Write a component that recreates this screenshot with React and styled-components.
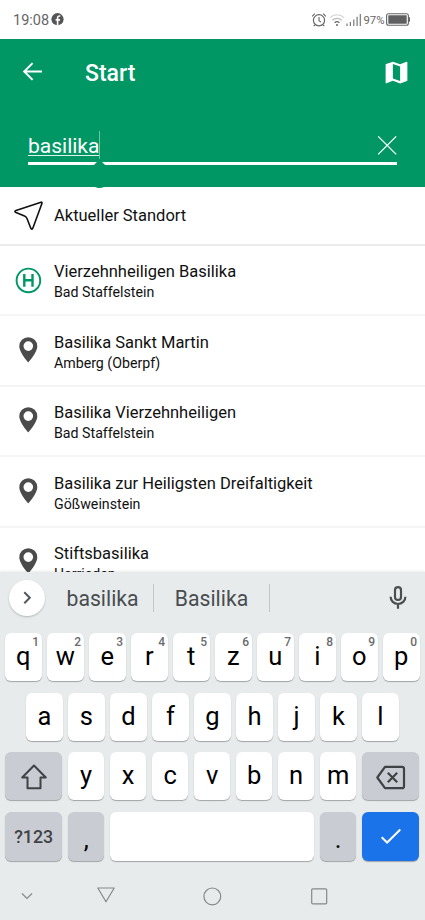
import React from "react";
import styled, { createGlobalStyle } from "styled-components";

const colors = {
  green: "#009765",
  keyboard: "#e7ebec",
  modifier: "#c9ccd3",
  enter: "#1a73e8",
  dark: "#3f4346"
};

const GlobalStyle = createGlobalStyle`
  * {
    box-sizing: border-box;
  }
  body {
    margin: 0;
    background: #fff;
    font-family: Roboto, "Liberation Sans", sans-serif;
  }
  svg {
    display: block;
    flex: none;
  }
`;

const Screen = styled.div`
  width: 425px;
  height: 920px;
  display: flex;
  flex-direction: column;
  overflow: hidden;
  background: #fff;
`;

const StatusBar = styled.div`
  height: 39px;
  flex: none;
  display: flex;
  align-items: center;
  padding: 0 14px 0 13px;
  color: #666;
`;

const Clock = styled.span`
  font-size: 14.5px;
  line-height: 20px;
  margin-right: 2px;
  padding-top: 2px;
`;

const StatusIcons = styled.div`
  display: flex;
  align-items: center;
  gap: 1.5px;
  margin-left: auto;
`;

const Percent = styled.span`
  font-size: 11.3px;
  width: 21px;
  padding-top: 1px;
`;

const Header = styled.header`
  position: relative;
  height: 148px;
  flex: none;
  background: ${colors.green};
  color: #fff;
`;

const TitleBar = styled.div`
  display: flex;
  align-items: center;
  height: 66px;
  padding: 0 14px 0 20px;
`;

const Title = styled.h1`
  flex: 1;
  margin: 4px 0 0 41px;
  font-size: 23px;
  line-height: 28px;
  font-weight: 500;
`;

const SearchField = styled.div`
  display: flex;
  justify-content: space-between;
  height: 34px;
  margin: 26px 28px 0;
  border-bottom: 3px solid #fff;
`;

const Query = styled.span`
  height: 25px;
  font-size: 21px;
  line-height: 31px;
  border-bottom: 1px solid #e2f3ed;
`;

const Cursor = styled.span`
  width: 1px;
  height: 28px;
  margin-right: auto;
  background: #6cc3a6;
`;

const CursorHandle = styled.svg`
  position: absolute;
  left: 87px;
  top: 120px;
  z-index: 1;
`;

const Results = styled.div`
  flex: none;
  height: 385px;
  overflow: hidden;
`;

const CurrentLocation = styled.div`
  display: flex;
  align-items: center;
  height: 59px;
  border-bottom: 2px solid #ebebeb;
`;

const Result = styled.div`
  display: flex;
  align-items: center;
  height: 70.4px;
  border-bottom: 2px solid #f5f5f5;
`;

const IconSlot = styled.div`
  width: 54px;
  padding: 1px 0 0 13px;
`;

const ResultText = styled.div`
  padding-top: 3.6px;
`;

const Name = styled.div`
  font-size: 16.5px;
  line-height: 22px;
  color: #111;
`;

const Place = styled.div`
  font-size: 14.2px;
  line-height: 19.2px;
  color: #111;
`;

const Keyboard = styled.div`
  flex: 1;
  background: ${colors.keyboard};
  box-shadow: 0 -1px 2px rgba(0, 0, 0, 0.08);
  position: relative;
`;

const Suggestions = styled.div`
  display: flex;
  align-items: center;
  height: 52px;
  padding: 0 14px 0 9px;
`;

const Expand = styled.div`
  display: flex;
  align-items: center;
  justify-content: center;
  width: 36px;
  height: 36px;
  border-radius: 50%;
  background: #fff;
  box-shadow: 0 1px 2px rgba(0, 0, 0, 0.22);
`;

const Suggestion = styled.div`
  width: ${props => props.$width}px;
  height: 28px;
  padding-left: ${props => props.$indent}px;
  line-height: 30px;
  font-size: 21.2px;
  color: #494d50;
  border-right: 1px solid #c3c7c9;
`;

const Keys = styled.div`
  display: flex;
  flex-direction: column;
  gap: 11.6px;
  padding: 9px 5px 0;
`;

const KeyRow = styled.div`
  display: flex;
  gap: 5.5px;
  padding-left: ${props => props.$indent || 0}px;
`;

const Key = styled.div`
  position: relative;
  display: flex;
  align-items: center;
  justify-content: center;
  width: ${props => props.$width || 36.5}px;
  height: ${props => (props.$tall ? 49 : 48)}px;
  padding-top: ${props => props.$drop || 0}px;
  padding-bottom: ${props => (props.$drop === undefined ? 2 : 0)}px;
  border-radius: 6px;
  background: ${props => props.$background || "#fff"};
  box-shadow: 0 1px 1px rgba(0, 0, 0, 0.3);
  font-size: 25.5px;
  line-height: 30px;
  color: #000;
`;

const Hint = styled.span`
  position: absolute;
  top: 2px;
  right: 2.5px;
  font-size: 12px;
  line-height: 14px;
  font-weight: 500;
  color: #686b6e;
`;

const SymbolsLabel = styled.span`
  font-size: 17.8px;
  font-weight: 500;
  color: ${colors.dark};
`;

const NavBar = styled.div`
  display: grid;
  grid-template-columns: 53px 106px 106px 107px;
  align-items: center;
  justify-items: center;
  height: 24px;
  margin-top: 23px;
`;

const FacebookIcon = () => (
  <svg width="13" height="13" viewBox="0 0 13 13">
    <circle cx="6.5" cy="6.2" r="6.1" fill="#555" />
    <path
      d="M9.3 3H8.2C7 3 6.6 3.7 6.6 4.7V12.400M4.600 6.900H9"
      fill="none"
      stroke="#fff"
      strokeWidth="1.6"
    />
  </svg>
);

const AlarmIcon = () => (
  <svg width="16" height="16" viewBox="0 0 16 16" fill="none" stroke="#666">
    <circle cx="8" cy="8.3" r="5.6" strokeWidth="1.2" />
    <path
      d="M8 5v3.6l2 1.5M1.2 4.3l2.6-2.6M14.8 4.3l-2.6-2.6M4 12.8l-1.3 1.4M12 12.8l1.3 1.4"
      strokeWidth="1.1"
    />
  </svg>
);

const WifiIcon = () => (
  <svg width="16" height="14" viewBox="0 0 16 14" fill="none" strokeWidth="1.2">
    <path d="M1 4.6a10 10 0 0 1 14 0" stroke="#d2d2d2" />
    <path d="M3.4 7.3a6.6 6.6 0 0 1 9.2 0" stroke="#bbb" />
    <path d="M5.6 9.8a3.6 3.6 0 0 1 4.8 0" stroke="#666" />
    <circle cx="8" cy="12" r="1" fill="#666" />
  </svg>
);

const SignalIcon = () => (
  <svg width="16" height="14" viewBox="0 0 16 14" stroke="#777" strokeWidth="1.2">
    <path d="M1 13v-2.5M4.4 13V9M7.8 13V6.5M11.1 13V3.7M14.3 13V1" />
  </svg>
);

const BatteryIcon = () => (
  <svg width="25" height="13" viewBox="0 0 25 13">
    <rect x="0.6" y="0.7" width="21.8" height="11.6" rx="2" fill="none" stroke="#666" strokeWidth="1.1" />
    <rect x="2.3" y="2.2" width="18.4" height="8.6" rx="0.5" fill="#606060" />
    <path d="M23.3 4.2v4.6" stroke="#666" strokeWidth="1.4" />
  </svg>
);

const BackIcon = () => (
  <svg width="24" height="24" viewBox="0 0 24 24" fill="none" stroke="#fff" strokeWidth="2">
    <path d="M22 11.5H4.4M12.6 3.1l-8.4 8.4 8.4 8.4" />
  </svg>
);

const MapIcon = () => (
  <svg width="29" height="29" viewBox="0 0 24 24" fill="#fff">
    <path d="M20.5 3l-.16.03L15 5.1 9 3 3.36 4.9c-.21.07-.36.25-.36.48V20.5c0 .28.22.5.5.5l.16-.03L9 18.9l6 2.1 5.64-1.9c.21-.07.36-.25.36-.48V3.5c0-.28-.22-.5-.5-.5zM15 19l-6-2.11V5l6 2.11V19z" />
  </svg>
);

const ClearIcon = () => (
  <svg width="20" height="28" viewBox="0 0 20 28" stroke="#fff" strokeWidth="1.3">
    <path d="M1.2 5.4l18 18M19.2 5.4l-18 18" />
  </svg>
);

const LocationArrow = () => (
  <svg width="31" height="30" viewBox="0 0 31 30" fill="none" stroke="#111" strokeWidth="1.6" strokeLinejoin="round">
    <path d="M28 1.2L3 9.6Q0.8 10.5 3 11.5L11.5 15Q13.3 15.700 14 17.500L17.800 27.200Q19.200 29.200 20 26.800L29 2.200Q29.200 1 28 1.200Z" />
  </svg>
);

const StopIcon = () => (
  <svg width="30" height="30" viewBox="0 0 30 30" fill="none" stroke={colors.green}>
    <circle cx="15.4" cy="14.4" r="11.8" strokeWidth="1.9" />
    <path d="M11.3 8v12.8M19.5 8v12.800M11.300 14.200h8.200" strokeWidth="2.4" />
  </svg>
);

const PinIcon = () => (
  <svg width="30" height="30" viewBox="0 0 30 30" fill="#4b4b4b">
    <path
      fillRule="evenodd"
      d="M15.3 1.200a9 9 0 0 0-9 9c0 6.400 9 16.200 9 16.200s9-9.800 9-16.200a9 9 0 0 0-9-9zm0 4.100a4.800 4.800 0 1 1 0 9.600a4.800 4.800 0 1 1 0-9.600z"
    />
  </svg>
);

const ExpandIcon = () => (
  <svg width="16" height="16" viewBox="0 0 16 16" fill="none" stroke="#55585b" strokeWidth="2">
    <path d="M5.3 2.3l5.5 5.5-5.5 5.5" />
  </svg>
);

const MicIcon = () => (
  <svg width="26" height="28" viewBox="0 0 26 28" fill="none" stroke="#4b4f52" strokeWidth="2.2">
    <rect x="10" y="3.2" width="6" height="12.8" rx="3" />
    <path d="M5.6 12.8a7.4 7.2 0 0 0 14.8 0M13 20v4.7" />
  </svg>
);

const ShiftIcon = () => (
  <svg width="30" height="28" viewBox="0 0 30 28" fill="none" stroke={colors.dark} strokeWidth="2" strokeLinejoin="round">
    <path d="M15 2.500L3.200 14.500H8.500V25.300H21.500V14.500H26.800Z" />
  </svg>
);

const BackspaceIcon = () => (
  <svg width="32" height="26" viewBox="0 0 32 26" fill="none" stroke={colors.dark} strokeWidth="2.200">
    <path d="M10 2.800H27Q29 2.800 29 4.800V22.200Q29 24.200 27 24.200H10L2.300 13.500Z" strokeLinejoin="round" />
    <path d="M12.800 8.800l9.400 9.400M22.200 8.800l-9.400 9.400" />
  </svg>
);

const CheckIcon = () => (
  <svg width="24" height="20" viewBox="0 0 24 20" fill="none" stroke="#fff" strokeWidth="2">
    <path d="M2.7 11.2l5.4 5.3L21.3 3.5" />
  </svg>
);

const NavIcons = () => (
  <>
    <svg width="14" height="12" viewBox="0 0 14 12" fill="none" stroke="#85898b" strokeWidth="1.2">
      <path d="M2 3.5l5 5 5-5" />
    </svg>
    <svg width="20" height="20" viewBox="0 0 20 20" fill="none" stroke="#85898b" strokeWidth="1.2">
      <path d="M1.800 2H18.200L10 15.800Z" strokeLinejoin="round" />
    </svg>
    <svg width="20" height="20" viewBox="0 0 20 20" fill="none" stroke="#85898b" strokeWidth="1.2">
      <circle cx="10.300" cy="10.400" r="8.400" />
    </svg>
    <svg width="18" height="18" viewBox="0 0 18 18" fill="none" stroke="#85898b" strokeWidth="1.2">
      <rect x="1.700" y="1.800" width="15" height="15" rx="1" />
    </svg>
  </>
);

const results = [
  { name: "Vierzehnheiligen Basilika", place: "Bad Staffelstein", stop: true },
  { name: "Basilika Sankt Martin", place: "Amberg (Oberpf)" },
  { name: "Basilika Vierzehnheiligen", place: "Bad Staffelstein" },
  { name: "Basilika zur Heiligsten Dreifaltigkeit", place: "Gößweinstein" },
  { name: "Stiftsbasilika", place: "Herrieden" }
];

const App = () => (
  <Screen>
    <GlobalStyle />
    <StatusBar>
      <Clock>19:08</Clock>
      <FacebookIcon />
      <StatusIcons>
        <AlarmIcon />
        <WifiIcon />
        <SignalIcon />
        <Percent>97%</Percent>
        <BatteryIcon />
      </StatusIcons>
    </StatusBar>
    <Header>
      <TitleBar>
        <BackIcon />
        <Title>Start</Title>
        <MapIcon />
      </TitleBar>
      <SearchField>
        <Query>basilika</Query>
        <Cursor />
        <ClearIcon />
      </SearchField>
      <CursorHandle width="25" height="30" viewBox="0 0 25 30" fill={colors.green}>
        <path d="M12.500 0.500L20.800 8.800A11.800 11.800 0 1 1 4.200 8.800Z" />
      </CursorHandle>
    </Header>
    <Results>
      <CurrentLocation>
        <IconSlot>
          <LocationArrow />
        </IconSlot>
        <Name>Aktueller Standort</Name>
      </CurrentLocation>
      {results.map(({ name, place, stop }) => (
        <Result key={name}>
          <IconSlot>{stop ? <StopIcon /> : <PinIcon />}</IconSlot>
          <ResultText>
            <Name>{name}</Name>
            <Place>{place}</Place>
          </ResultText>
        </Result>
      ))}
    </Results>
    <Keyboard>
      <Suggestions>
        <Expand>
          <ExpandIcon />
        </Expand>
        <Suggestion $width={109} $indent={21.5}>
          basilika
        </Suggestion>
        <Suggestion $width={115.5} $indent={20.8}>
          Basilika
        </Suggestion>
        <StatusIcons>
          <MicIcon />
        </StatusIcons>
      </Suggestions>
      <Keys>
        <KeyRow>
          {"qwertzuiop".split("").map((letter, i) => (
            <Key key={letter}>
              {letter}
              <Hint>{(i + 1) % 10}</Hint>
            </Key>
          ))}
        </KeyRow>
        <KeyRow $indent={21.2}>
          {"asdfghjkl".split("").map(letter => (
            <Key key={letter}>{letter}</Key>
          ))}
        </KeyRow>
        <KeyRow>
          <Key $width={57.4} $background={colors.modifier} $drop={1}>
            <ShiftIcon />
          </Key>
          {"yxcvbnm".split("").map(letter => (
            <Key key={letter}>{letter}</Key>
          ))}
          <Key $width={57.5} $background={colors.modifier} $drop={1}>
            <BackspaceIcon />
          </Key>
        </KeyRow>
        <KeyRow>
          <Key $tall $width={57.4} $background={colors.modifier} $drop={1}>
            <SymbolsLabel>?123</SymbolsLabel>
          </Key>
          <Key $tall $background={colors.modifier} $drop={6}>
            ,
          </Key>
          <Key $tall $width={204.5} />
          <Key $tall $background={colors.modifier} $drop={6}>
            .
          </Key>
          <Key $tall $width={57.5} $background={colors.enter} $drop={0}>
            <CheckIcon />
          </Key>
        </KeyRow>
      </Keys>
      <NavBar>
        <NavIcons />
      </NavBar>
    </Keyboard>
  </Screen>
);

export default App;
